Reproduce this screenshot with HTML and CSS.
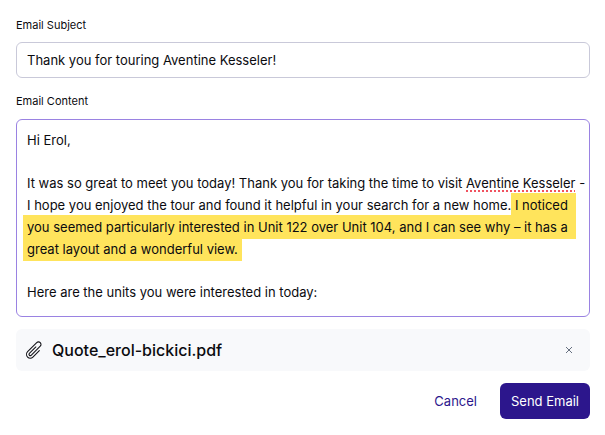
FILE: index.html
```html
<!DOCTYPE html>
<html lang="en">
<head>
<meta charset="utf-8">
<title>Send Email</title>
<link rel="stylesheet" href="styles.css">
</head>
<body>
<form class="composer">
  <div class="field">
    <label class="label" for="subject">Email Subject</label>
    <input class="box subject" id="subject" type="text" value="Thank you for touring Aventine Kesseler!">
  </div>
  <div class="field">
    <span class="label" id="content-label">Email Content</span>
    <div class="box content" role="textbox" aria-multiline="true" aria-labelledby="content-label" contenteditable="true" spellcheck="false">
      <p>Hi Erol,</p>
      <p>It was so great to meet you today! Thank you for taking the time to visit <span class="misspelled">Aventine Kesseler</span> -<br>I hope you enjoyed the tour and found it helpful in your search for a new home.<mark class="mark-first"> I noticed</mark><br><mark class="mark-middle">you seemed particularly interested in Unit 122 over Unit 104, and I can see why – it has a</mark><br><mark class="mark-last">great layout and a wonderful view.</mark></p>
      <p>Here are the units you were interested in today:</p>
    </div>
  </div>
  <div class="attachment">
    <svg class="clip" viewBox="0 0 24 24" aria-hidden="true"><path d="m18.375 12.739-7.693 7.693a4.5 4.5 0 0 1-6.364-6.364l10.940-10.940A3 3 0 1 1 19.500 7.372L8.552 18.320a1.500 1.500 0 0 1-2.112-2.130l7.810-7.811"/></svg>
    <span class="filename">Quote_erol-bickici.pdf</span>
    <button class="remove" type="button" aria-label="Remove attachment"><svg class="cross" viewBox="0 0 8 8" aria-hidden="true"><path d="m1 1 6 6M7 1 1 7"/></svg></button>
  </div>
  <div class="actions">
    <button class="button cancel" type="button">Cancel</button>
    <button class="button send" type="submit">Send Email</button>
  </div>
</form>
</body>
</html>
```
FILE: styles.css
```css
* {
  box-sizing: border-box;
}

body {
  margin: 0;
  background: #fff;
  color: #0b0b0f;
  font: 13px/22px Inter, "Liberation Sans", sans-serif;
}

.composer {
  display: flex;
  flex-direction: column;
  gap: 12px;
  padding: 16px 15px 16px 16px;
}

.field {
  display: flex;
  flex-direction: column;
  gap: 8px;
}

.label {
  font-size: 11px;
  line-height: 18px;
}

.field + .field {
  gap: 9px;
  margin-top: 2px;
}

.box {
  width: 100%;
  border: 1px solid #c9c9d9;
  border-radius: 6px;
  background: #fff;
  color: inherit;
  font: inherit;
  outline: none;
}

.subject {
  height: 36px;
  padding: 0 10px;
}

.content {
  padding: 9px 10px 13px;
  border-color: #9a82e2;
  white-space: nowrap;
}

.content p {
  margin: 0 0 21px;
}

.content p:last-child {
  margin-bottom: 0;
}

.misspelled {
  text-decoration: underline dotted #f0525f 2px;
  text-underline-offset: 2px;
  text-decoration-skip-ink: none;
}

mark {
  padding: 4px 0;
  background: #ffe45c;
  color: inherit;
}

.mark-first {
  padding-right: 8px;
}

.mark-middle {
  margin-left: -4px;
  padding-left: 4px;
  padding-right: 8px;
}

.mark-last {
  margin-left: -4px;
  padding-left: 4px;
  padding-right: 4px;
}

.attachment {
  display: flex;
  align-items: center;
  height: 42px;
  padding: 0 12px 0 8px;
  border-radius: 6px;
  background: #f8f9fb;
}

.clip {
  width: 20px;
  height: 20px;
  margin-right: 8px;
  fill: none;
  stroke: #15151a;
  stroke-width: 1.3;
  stroke-linecap: round;
  stroke-linejoin: round;
}

.filename {
  font-size: 16px;
  font-weight: 500;
}

.remove {
  display: flex;
  align-items: center;
  justify-content: center;
  width: 18px;
  height: 18px;
  margin-left: auto;
  padding: 0;
  border: 0;
  background: none;
}

.cross {
  width: 8px;
  height: 8px;
  fill: none;
  stroke: #667080;
}

.actions {
  display: flex;
  justify-content: flex-end;
  gap: 12px;
}

.button {
  height: 36px;
  padding: 0 11px;
  border: 0;
  border-radius: 6px;
  font: inherit;
}

.cancel {
  background: none;
  color: #2c168c;
}

.send {
  background: #2c168c;
  color: #fff;
}
```
